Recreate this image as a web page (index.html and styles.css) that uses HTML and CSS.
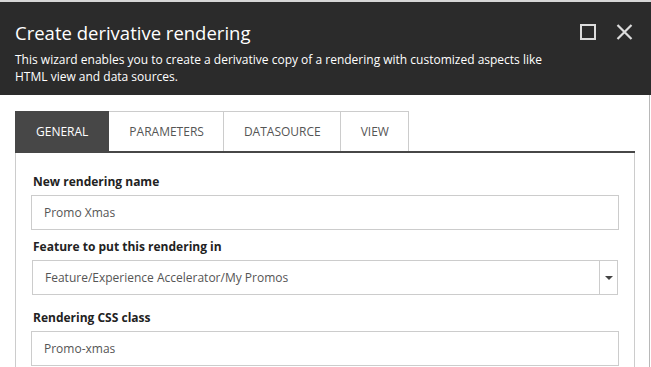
FILE: index.html
```html
<!DOCTYPE html>
<html lang="en">
<head>
    <meta charset="UTF-8">
    <meta name="viewport" content="width=device-width, initial-scale=1.0">
    <title>Create derivative rendering</title>
    <link rel="stylesheet" href="styles.css">
</head>
<body>

    <!-- Dialog header -->
    <div class="dialog-header">
        <div class="header-text">
            <h1>Create derivative rendering</h1>
            <p>This wizard enables you to create a derivative copy of a rendering with customized aspects like HTML view and data sources.</p>
        </div>
        <div class="header-buttons">
            <svg width="16" height="16" viewBox="0 0 16 16"><rect x="1" y="1" width="14" height="14" fill="none" stroke="#dcdcdc" stroke-width="2"/></svg>
            <svg width="17" height="16" viewBox="0 0 17 16"><path d="M1.5 1 L15.5 15 M15.5 1 L1.5 15" stroke="#dcdcdc" stroke-width="2.2" fill="none"/></svg>
        </div>
    </div>

    <!-- Dialog body -->
    <div class="dialog-body">
        <ul class="tabs">
            <li class="active">General</li>
            <li>Parameters</li>
            <li>Datasource</li>
            <li>View</li>
        </ul>

        <div class="panel">
            <label>New rendering name</label>
            <div class="field">Promo Xmas</div>

            <label>Feature to put this rendering in</label>
            <div class="select">
                <div class="select-value">Feature/Experience Accelerator/My Promos</div>
                <div class="select-btn"><span class="caret"></span></div>
            </div>

            <label class="after-select">Rendering CSS class</label>
            <div class="field">Promo-xmas</div>
        </div>
    </div>

</body>
</html>
```

FILE: styles.css
```css
/* General Reset */
* {
    margin: 0;
    padding: 0;
    box-sizing: border-box;
}

body {
    font-family: 'Open Sans', 'Noto Sans', sans-serif;
    background-color: #fff;
    color: #333;
    height: 100vh;
    overflow: hidden;
    border-top: 2px solid #d6d6d6;
}

/* Header */
.dialog-header {
    background-color: #2b2b2b;
    color: #fff;
    height: 93px;
    padding: 18px 15px 0 15px;
    display: flex;
    justify-content: space-between;
}

.dialog-header h1 {
    font-size: 18.5px;
    font-weight: normal;
    line-height: 26px;
    margin-bottom: 5px;
}

.dialog-header p {
    font-size: 12px;
    line-height: 17px;
    width: 545px;
}

.header-buttons {
    display: flex;
    gap: 20px;
    padding-top: 4px;
    padding-right: 3px;
}

/* Body */
.dialog-body {
    padding: 16px 15px 0 15px;
    border-right: 1px solid #b8b8b8;
    width: 650px;
    height: 272px;
}

.tabs {
    list-style: none;
    display: flex;
    border-bottom: 2px solid #474747;
    width: 620px;
}

.tabs li {
    font-size: 12px;
    text-transform: uppercase;
    color: #555;
    height: 40px;
    line-height: 40px;
    padding: 0 19px 0 20px;
    border: 1px solid #ccc;
    border-bottom: none;
    border-left: none;
}

.tabs li.active {
    background-color: #474747;
    color: #fff;
    border-color: #474747;
    padding: 0 20px 0 21px;
}

.panel {
    width: 620px;
    height: 220px;
    border-left: 1px solid #ccc;
    border-right: 1px solid #ccc;
    padding: 20px 15px 0 15px;
}

.panel label {
    display: block;
    font-size: 12px;
    font-weight: bold;
    color: #222;
    line-height: 18px;
    padding-left: 2px;
    margin-bottom: 4px;
}

.panel label.after-select {
    margin-top: 14px;
}

.field {
    height: 35px;
    border: 1px solid #ccc;
    font-size: 12px;
    color: #555;
    line-height: 33px;
    padding-left: 12px;
    margin-bottom: 8px;
}

.select {
    display: flex;
    height: 35px;
    margin-left: 1px;
    margin-right: 1px;
}

.select-value {
    flex: 1;
    border: 1px solid #ccc;
    font-size: 12px;
    color: #555;
    line-height: 33px;
    padding-left: 12px;
}

.select-btn {
    width: 18px;
    border: 1px solid #ccc;
    border-left: none;
    display: flex;
    align-items: center;
    justify-content: center;
}

.caret {
    width: 0;
    height: 0;
    border-left: 4px solid transparent;
    border-right: 4px solid transparent;
    border-top: 4px solid #444;
}
```
